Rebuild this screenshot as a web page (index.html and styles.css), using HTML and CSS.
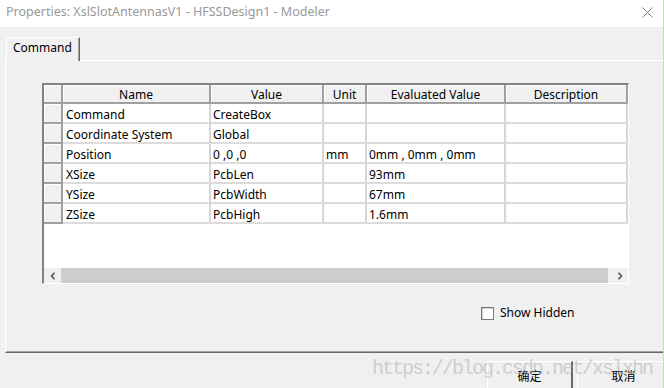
FILE: index.html
```html
<!DOCTYPE html>
<html>
<head>
<meta charset="utf-8">
<title>Properties</title>
<link rel="stylesheet" href="styles.css">
</head>
<body>
<div class="window">
  <div class="titlebar">
    <span class="title">Properties: XslSlotAntennasV1 - HFSSDesign1 - Modeler</span>
    <svg class="close" width="11" height="11" viewBox="0 0 11 11"><path d="M0.5 0.5 L10.5 10.5 M10.5 0.5 L0.5 10.5" stroke="#808080" stroke-width="1" fill="none"/></svg>
  </div>
  <div class="tabs"><div class="tab">Command</div></div>
  <div class="panel">
    <div class="grid">
      <table class="props">
        <colgroup>
          <col class="c-rh"><col class="c-name"><col class="c-value"><col class="c-unit"><col class="c-eval"><col class="c-desc">
        </colgroup>
        <thead>
          <tr><th></th><th>Name</th><th>Value</th><th>Unit</th><th>Evaluated Value</th><th>Description</th></tr>
        </thead>
        <tbody>
          <tr><td class="rh"></td><td class="nm">Command</td><td>CreateBox</td><td></td><td></td><td></td></tr>
          <tr><td class="rh"></td><td class="nm">Coordinate System</td><td>Global</td><td></td><td></td><td></td></tr>
          <tr><td class="rh"></td><td class="nm">Position</td><td>0 ,0 ,0</td><td>mm</td><td>0mm , 0mm , 0mm</td><td></td></tr>
          <tr><td class="rh"></td><td class="nm">XSize</td><td>PcbLen</td><td></td><td>93mm</td><td></td></tr>
          <tr><td class="rh"></td><td class="nm">YSize</td><td>PcbWidth</td><td></td><td>67mm</td><td></td></tr>
          <tr><td class="rh"></td><td class="nm">ZSize</td><td>PcbHigh</td><td></td><td>1.6mm</td><td></td></tr>
        </tbody>
      </table>
      <div class="grid-empty"></div>
      <div class="hscroll">
        <div class="arr"><svg width="6" height="8" viewBox="0 0 6 8"><path d="M4.5 0.8 L1.5 4 L4.5 7.2" stroke="#555" stroke-width="1.6" fill="none"/></svg></div>
        <div class="thumb"></div>
        <div class="arr"><svg width="6" height="8" viewBox="0 0 6 8"><path d="M1.5 0.8 L4.5 4 L1.5 7.2" stroke="#555" stroke-width="1.6" fill="none"/></svg></div>
      </div>
    </div>
    <div class="show"><span class="check"></span><span>Show Hidden</span></div>
  </div>
  <div class="footer">
    <div class="btn ok">确定</div>
    <div class="btn cancel">取消</div>
  </div>
  <div class="watermark">https://blog.csdn.net/xslxhn</div>
</div>
</body>
</html>
```
FILE: styles.css
```css
* { box-sizing: border-box; }
html, body { margin: 0; padding: 0; }
body {
  width: 664px;
  height: 388px;
  overflow: hidden;
  background: #f0f0f0;
  font-family: "Noto Sans", "Noto Sans CJK SC", sans-serif;
  font-size: 12px;
  color: #000;
}
.window {
  position: relative;
  width: 664px;
  height: 388px;
  background: #f0f0f0;
  border-right: 1px solid #c4dfb2;
  overflow: hidden;
}
.titlebar {
  height: 27px;
  background: #fff;
  display: flex;
  justify-content: space-between;
  align-items: flex-start;
  padding-left: 6px;
}
.title {
  color: #999;
  font-size: 12.5px;
  line-height: 16px;
  padding-top: 4px;
}
.close {
  margin-top: 7px;
  margin-right: 10px;
}
.tabs {
  display: flex;
  padding: 10px 0 0 6px;
}
.tab {
  position: relative;
  z-index: 1;
  width: 74px;
  height: 24px;
  margin-bottom: -1px;
  background: #f0f0f0;
  border-top: 1px solid #fff;
  border-left: 1px solid #fff;
  border-right: 1px solid #696969;
  box-shadow: inset -1px 0 0 #a0a0a0;
  border-top-left-radius: 2px;
  padding: 2px 0 0 6px;
  line-height: 16px;
}
.panel {
  margin-left: 5px;
  height: 293px;
  border-top: 1px solid #fff;
  border-left: 1px solid #fff;
  border-bottom: 1px solid #696969;
  box-shadow: inset 0 -1px 0 #a0a0a0;
  padding: 22px 0 0 36px;
}
.grid {
  width: 587px;
  background: #fff;
  border-style: solid;
  border-width: 2px 1px 1px 2px;
  border-color: #828282 #fff #fff #828282;
}
.props {
  width: 584px;
  table-layout: fixed;
  border-collapse: separate;
  border-spacing: 0;
}
.c-rh { width: 19px; }
.c-name { width: 148px; }
.c-value { width: 113px; }
.c-unit { width: 43px; }
.c-eval { width: 139px; }
.c-desc { width: 122px; }
.props th {
  font-weight: normal;
  background: #f0f0f0;
  padding: 3px 0 0 0;
  line-height: 14px;
  border-right: 2px solid #a0a0a0;
  border-bottom: 2px solid #a0a0a0;
  box-shadow: inset 1px 1px 0 #fff;
  text-align: center;
  white-space: nowrap;
  overflow: hidden;
}
.props td {
  padding: 3px 0 0 2px;
  line-height: 15px;
  border-right: 2px solid #d6d6d6;
  border-bottom: 2px solid #dcdcdc;
  white-space: nowrap;
  overflow: hidden;
}
.props td.nm { padding-left: 3px; }
.props td.rh {
  background: #f0f0f0;
  border-right: 2px solid #a0a0a0;
  border-bottom: 2px solid #a0a0a0;
  box-shadow: inset 1px 1px 0 #fff;
}
.grid-empty { height: 44px; }
.hscroll {
  display: flex;
  height: 15px;
  background: #f0f0f0;
}
.arr {
  width: 17px;
  display: flex;
  align-items: center;
  justify-content: center;
}
.thumb {
  flex: 1;
  background: #cdcdcd;
  margin-right: 3px;
}
.show {
  display: flex;
  align-items: center;
  gap: 6px;
  margin: 21px 0 0 439px;
  line-height: 16px;
}
.check {
  width: 13px;
  height: 13px;
  background: #fff;
  border: 1px solid #7a7a7a;
  box-shadow: inset 1px 1px 0 #d0d0d0;
}
.footer {
  display: flex;
  gap: 4px;
  padding: 8px 0 0 487px;
}
.btn {
  height: 30px;
  flex: none;
  background: #f0f0f0;
  border-top: 1px solid #fff;
  border-left: 1px solid #fff;
  border-right: 2px solid #696969;
  text-align: center;
  padding-top: 6px;
  line-height: 16px;
  font-family: "Noto Sans CJK SC", sans-serif;
}
.ok { width: 86px; }
.cancel { width: 94px; }
.watermark {
  position: absolute;
  left: 372px;
  top: 359px;
  font-family: "Liberation Mono", monospace;
  font-size: 20px;
  line-height: 20px;
  letter-spacing: -2px;
  color: rgba(160, 160, 160, 0.45);
  white-space: nowrap;
  pointer-events: none;
}
```
